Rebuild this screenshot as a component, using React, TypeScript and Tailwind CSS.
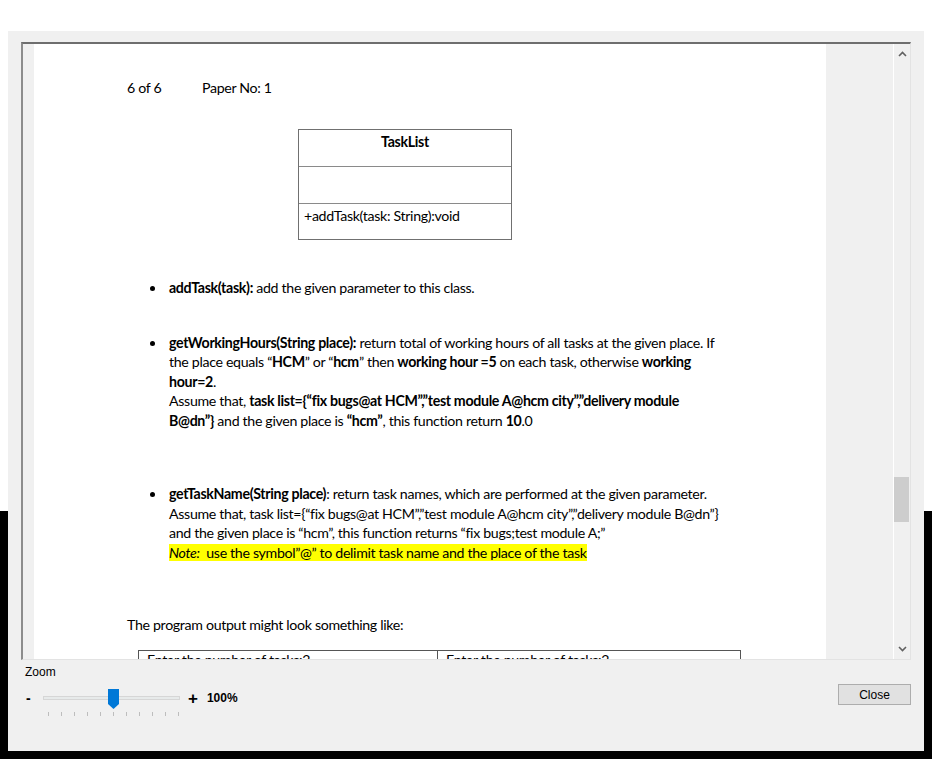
import React from "react";

const doc = { fontFamily: "Lato, 'Open Sans', sans-serif" };
const ui = { fontFamily: "'Liberation Sans', Arial, sans-serif" };

function Chevron({ up }: { up: boolean }) {
  return (
    <svg width="9" height="6" viewBox="0 0 9 6">
      <path
        d={up ? "M1 5 L4.5 1.5 L8 5" : "M1 1 L4.5 4.5 L8 1"}
        stroke="#606060"
        strokeWidth="1.6"
        fill="none"
      />
    </svg>
  );
}

function Bullet({ children }: { children: React.ReactNode }) {
  return (
    <div className="flex">
      <div className="w-[135px] flex justify-end pr-[14px] pt-[8px]">
        <div className="w-[5px] h-[5px] rounded-full bg-black" />
      </div>
      <div className="flex flex-col">{children}</div>
    </div>
  );
}

function L({ children }: { children: React.ReactNode }) {
  return <div className="whitespace-nowrap h-[19.5px] leading-[19.5px]">{children}</div>;
}

export default function App() {
  return (
    <div className="relative w-[932px] h-[759px] overflow-hidden flex flex-col">
      <div className="h-[511px] bg-white" />
      <div className="flex-1 bg-black" />
      <div className="absolute left-[8px] top-[31px] w-[916px] h-[720px] bg-[#f0f0f0] flex flex-col">
        {/* document viewer */}
        <div className="mt-[11px] mx-[13px] h-[618px] flex border-t-2 border-l-2 border-t-[#6e6e6e] border-l-[#8c8c8c] border-r border-b border-r-[#e3e3e3] border-b-[#e3e3e3]">
          <div className="w-[11px] bg-[#f0f0f0]" />
          <div className="w-[792px] bg-white overflow-hidden text-[14.2px] tracking-[-0.33px] text-black" style={doc}>
            <div className="pt-[34px] flex pl-[93px] leading-[20px]">
              <div className="w-[75px]">6 of 6</div>
              <div>Paper No: 1</div>
            </div>
            <div className="ml-[264px] mt-[31px] w-[214px] border border-[#707070]">
              <div className="h-[37px] border-b border-[#8a8a8a] text-center font-bold pt-[1px]">TaskList</div>
              <div className="h-[37px] border-b border-[#8a8a8a]" />
              <div className="h-[35px] pl-[5px] pt-[1px]">+addTask(task: String):void</div>
            </div>
            <div className="mt-[38px]">
              <Bullet>
                <L>
                  <b>addTask(task):</b> add the given parameter to this class.
                </L>
              </Bullet>
            </div>
            <div className="mt-[35px]">
              <Bullet>
                <L>
                  <b>getWorkingHours(String place):</b> return total of working hours of all tasks at the given place. If
                </L>
                <L>
                  the place equals “<b>HCM</b>” or “<b>hcm</b>” then <b>working hour =5</b> on each task, otherwise <b>working</b>
                </L>
                <L>
                  <b>hour=2</b>.
                </L>
                <L>
                  Assume that, <b>task list={"{"}“fix bugs@at HCM”,”test module A@hcm city”,”delivery module</b>
                </L>
                <L>
                  <b>B@dn”{"}"}</b> and the given place is <b>“hcm”</b>, this function return <b>10</b>.0
                </L>
              </Bullet>
            </div>
            <div className="mt-[54px]">
              <Bullet>
                <L>
                  <b>getTaskName(String place)</b>: return task names, which are performed at the given parameter.
                </L>
                <L>Assume that, task list={"{"}“fix bugs@at HCM”,”test module A@hcm city”,”delivery module B@dn”{"}"}</L>
                <L>and the given place is “hcm”, this function returns “fix bugs;test module A;”</L>
                <L>
                  <span className="bg-[#ffff00]">
                    <i>Note:</i>&nbsp; use the symbol”@” to delimit task name and the place of the task
                  </span>
                </L>
              </Bullet>
            </div>
            <div className="mt-[53px] pl-[93px] leading-[20px]">The program output might look something like:</div>
            <div className="mt-[15px] ml-[104px] w-[603px] flex border border-[#555] leading-[16px]">
              <div className="w-[299px] border-r border-[#555] pl-[8px] pt-[1px]">Enter the number of tasks:2</div>
              <div className="flex-1 pl-[8px] pt-[1px]">Enter the number of tasks:2</div>
            </div>
          </div>
          <div className="w-[67px] bg-[#f0f0f0]" />
          <div className="w-[17px] bg-[#f0f0f0] border-l border-white flex flex-col items-center justify-between py-[7px]">
            <Chevron up />
            <div className="flex-1 w-full relative">
              <div className="absolute left-0 right-[1px] top-[420px] h-[45px] bg-[#cdcdcd]" />
            </div>
            <Chevron up={false} />
          </div>
        </div>
        {/* bottom panel */}
        <div className="flex-1 flex justify-between pl-[17px] pr-[13px]" style={ui}>
          <div className="flex flex-col">
            <div className="text-[12px] text-black mt-[5px] leading-[14px]">Zoom</div>
            <div className="flex items-center mt-[9px] h-[20px]">
              <div className="w-[8px] pl-[1px] text-[14px] font-bold leading-none">-</div>
              <div className="relative ml-[10px] w-[137px] h-[20px]">
                <div className="absolute left-0 right-0 top-[8px] h-[4px] bg-[#e7eaea] border border-[#d6d6d6]" />
                <div className="absolute left-[65px] top-[1px]">
                  <svg width="11" height="20" viewBox="0 0 11 20">
                    <path d="M0 0 H11 V15 L5.5 20 L0 15 Z" fill="#0078d7" />
                  </svg>
                </div>
              </div>
              <div className="ml-[8px] text-[17px] font-bold leading-none">+</div>
              <div className="ml-[9px] text-[12px] font-bold">100%</div>
            </div>
            <div className="flex ml-[23px] mt-[4px] gap-[12px]">
              {Array.from({ length: 11 }).map((_, i) => (
                <div key={i} className="w-[1px] h-[4px] bg-[#bdbdbd]" />
              ))}
            </div>
          </div>
          <div className="mt-[24px] w-[73px] h-[21px] bg-[#e1e1e1] border border-[#adadad] text-[12px] flex items-center justify-center text-black">
            Close
          </div>
        </div>
      </div>
    </div>
  );
}
